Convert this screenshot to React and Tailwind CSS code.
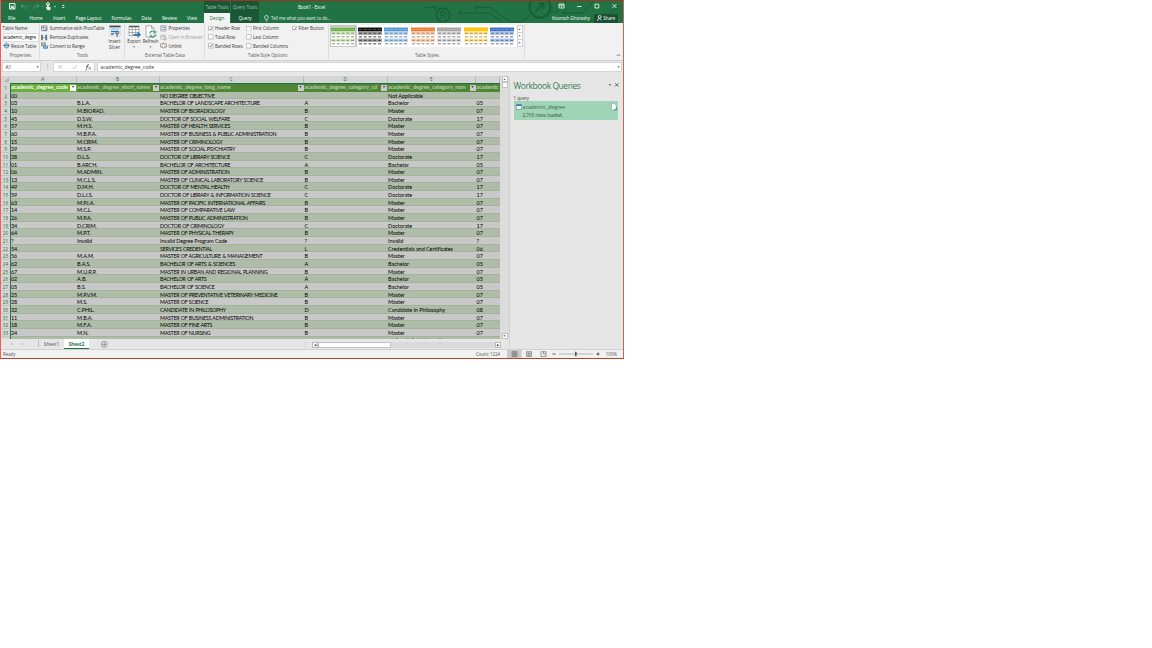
import React from "react";

const rows = [
  ["00", "", "NO DEGREE OBJECTIVE", "", "Not Applicable", ""],
  ["03", "B.L.A.", "BACHELOR OF LANDSCAPE ARCHITECTURE", "A", "Bachelor", "05"],
  ["10", "M.BIORAD.", "MASTER OF BIORADIOLOGY", "B", "Master", "07"],
  ["45", "D.S.W.", "DOCTOR OF SOCIAL WELFARE", "C", "Doctorate", "17"],
  ["57", "M.H.S.", "MASTER OF HEALTH SERVICES", "B", "Master", "07"],
  ["60", "M.B.P.A.", "MASTER OF BUSINESS & PUBLIC ADMINISTRATION", "B", "Master", "07"],
  ["15", "M.CRIM.", "MASTER OF CRIMINOLOGY", "B", "Master", "07"],
  ["29", "M.S.P.", "MASTER OF SOCIAL PSYCHIATRY", "B", "Master", "07"],
  ["38", "D.L.S.", "DOCTOR OF LIBRARY SCIENCE", "C", "Doctorate", "17"],
  ["01", "B.ARCH.", "BACHELOR OF ARCHITECTURE", "A", "Bachelor", "05"],
  ["06", "M.ADMIN.", "MASTER OF ADMINISTRATION", "B", "Master", "07"],
  ["13", "M.C.L.S.", "MASTER OF CLINICAL LABORATORY SCIENCE", "B", "Master", "07"],
  ["49", "D.M.H.", "DOCTOR OF MENTAL HEALTH", "C", "Doctorate", "17"],
  ["59", "D.L.I.S.", "DOCTOR OF LIBRARY & INFORMATION SCIENCE", "C", "Doctorate", "17"],
  ["63", "M.P.I.A.", "MASTER OF PACIFIC INTERNATIONAL AFFAIRS", "B", "Master", "07"],
  ["14", "M.C.L.", "MASTER OF COMPARATIVE LAW", "B", "Master", "07"],
  ["26", "M.P.A.", "MASTER OF PUBLIC ADMINISTRATION", "B", "Master", "07"],
  ["34", "D.CRIM.", "DOCTOR OF CRIMINOLOGY", "C", "Doctorate", "17"],
  ["64", "M.P.T.", "MASTER OF PHYSICAL THERAPY", "B", "Master", "07"],
  ["?", "Invalid", "Invalid Degree Program Code", "?", "Invalid", "?"],
  ["54", "", "SERVICES CREDENTIAL", "L", "Credentials and Certificates", "06"],
  ["56", "M.A.M.", "MASTER OF AGRICULTURE & MANAGEMENT", "B", "Master", "07"],
  ["62", "B.A.S.", "BACHELOR OF ARTS & SCIENCES", "A", "Bachelor", "05"],
  ["67", "M.U.R.P.", "MASTER IN URBAN AND REGIONAL PLANNING", "B", "Master", "07"],
  ["02", "A.B.", "BACHELOR OF ARTS", "A", "Bachelor", "05"],
  ["05", "B.S.", "BACHELOR OF SCIENCE", "A", "Bachelor", "05"],
  ["25", "M.P.V.M.", "MASTER OF PREVENTATIVE VETERINARY MEDICINE", "B", "Master", "07"],
  ["28", "M.S.", "MASTER OF SCIENCE", "B", "Master", "07"],
  ["32", "C.PHIL.", "CANDIDATE IN PHILOSOPHY", "D", "Candidate In Philosophy", "08"],
  ["11", "M.B.A.", "MASTER OF BUSINESS ADMINISTRATION", "B", "Master", "07"],
  ["18", "M.F.A.", "MASTER OF FINE ARTS", "B", "Master", "07"],
  ["24", "M.N.", "MASTER OF NURSING", "B", "Master", "07"],
];

const gridCols = "grid grid-cols-[9px_66.5px_83px_144.5px_83.5px_88.5px_24px]";
const headers = [
  "academic_degree_code",
  "academic_degree_short_name",
  "academic_degree_long_name",
  "academic_degree_category_cd",
  "academic_degree_category_nam",
  "academic",
];

const tabs = [
  ["File", "w-[21.5px]"],
  ["Home", "w-[23.5px]"],
  ["Insert", "w-[22.5px]"],
  ["Page Layout", "w-[36px]"],
  ["Formulas", "w-[30px]"],
  ["Data", "w-[20.5px]"],
  ["Review", "w-[25px]"],
  ["View", "w-[17px]"],
];

const styles = [
  ["#70ad47", "#d9ebcd", "#6f8a60"],
  ["#111111", "#a8a8a8", "#333333"],
  ["#5b9bd5", "#bcd8f1", "#54789c"],
  ["#ed7d31", "#f9d5bf", "#a8765a"],
  ["#a5a5a5", "#dcdcdc", "#707070"],
  ["#ffc000", "#ffe9a8", "#97854c"],
  ["#4472c4", "#b9caeb", "#4a6499"],
];

function Circuit() {
  return (
    <svg className="absolute left-[424px] top-px" width="198" height="22" viewBox="0 0 198 22" fill="none" stroke="#185c37" strokeWidth="1">
      <circle cx="18" cy="14" r="6.8" strokeWidth="1.4" />
      <path d="M16 17.500v-7h2.500a1.800 1.800 0 0 1 0 3.600H16m2.500 0 2 3.400" />
      <circle cx="10" cy="6.500" r="1.300" />
      <path d="M0 6.500h8.500" />
      <circle cx="35" cy="12" r="1.300" />
      <path d="M36.500 12H64l14 9M53 6.500h12l20 14.500" />
      <circle cx="51.500" cy="6.500" r="1.300" />
      <circle cx="115" cy="6" r="10.500" strokeWidth="2" />
      <path d="m110.500 10.500 8-8m-5.500 0h5.500v5.500" strokeWidth="1.600" />
      <path d="M85 21h11l9-7M124 11h8l9-10M141 12h17l10-11" />
      <circle cx="139" cy="12" r="1.300" />
      <path d="M164 20h12l18-15" />
    </svg>
  );
}

function TitleBar() {
  return (
    <div className="relative flex h-[23px] bg-[#217346] text-white">
      <Circuit />
      <div className="relative w-[203px]">
        <div className="flex h-[12px] items-center pl-[6.5px]">
          <svg width="60" height="9" viewBox="0 0 60 9" fill="none" stroke="#fff" strokeWidth=".9">
            <path d="M1.500 1.500H7V7H1.500zM2.500 4.200h3.500M3 7V5.500h2.500V7" />
            <g stroke="#5d9577">
              <path d="M15 2.200 13 4l2 1.800M13.300 4h3.200q2 .3 1.700 3" />
              <path d="m20.500 4 .8.800.8-.8" />
              <path d="m29 2.200 2 1.800-2 1.800M30.700 4h-3.200q-2 .3-1.700 3" />
              <path d="m33.500 4 .8.800.8-.8" />
            </g>
            <path d="M39.500 8 38 5.500l1.500-.3V2.500h1V5l2 .5-.5 2.500z" fill="#fff" strokeWidth=".4" />
            <circle cx="40" cy="2.200" r="1.500" />
            <path d="m46 4 .8.800.8-.8M54.300 3.500h2M54.300 5l1 1 1-1" />
          </svg>
        </div>
        <div className="flex h-[11px] items-center pl-[7px] pt-px text-[4.6px]">
          {tabs.map(([t, w]) => (
            <span key={t} className={w + " shrink-0"}>{t}</span>
          ))}
        </div>
      </div>
      <div className="relative w-[26px] bg-[#195736]">
        <div className="flex h-[13px] items-center justify-center pt-[1px] text-[4.4px] text-[#a5c8b4]">Table Tools</div>
        <div className="flex h-[10px] items-center justify-center bg-[#f3f3f3] text-[4.6px] text-[#217346]">Design</div>
      </div>
      <div className="relative ml-px w-[28px] bg-[#195736]">
        <div className="flex h-[13px] items-center justify-center pt-[1px] text-[4.4px] text-[#a5c8b4]">Query Tools</div>
        <div className="flex h-[10px] items-center justify-center text-[4.6px]">Query</div>
      </div>
      <div className="relative flex-1">
        <div className="flex h-[12px] items-center">
          <span className="ml-[39px] pt-[2px] text-[4.6px] tracking-[-.1px]">Book1 - Excel</span>
          <svg className="ml-auto" width="66" height="8" viewBox="0 0 66 8" fill="none" stroke="#fff" strokeWidth=".8">
            <path d="M2 2h5v4H2zM2 3.200h5M4.500 5.500V4M20 4.500h4.500M38 2.200h3.800V6H38zM55.500 2l4 4m0-4-4 4" />
          </svg>
        </div>
        <div className="flex h-[11px] items-center pt-px text-[4.4px]">
          <svg className="ml-[5px]" width="5" height="7" viewBox="0 0 5 7" fill="none" stroke="#fff" strokeWidth=".7">
            <path d="M1.700 4.500Q.7 3.500.7 2.300a1.800 1.800 0 0 1 3.600 0q0 1.200-1 2.200zM1.700 6h1.600" />
          </svg>
          <span className="ml-[2px] text-[#e3efe8] tracking-[-.05px]">Tell me what you want to do...</span>
          <span className="ml-auto mr-[4px]">Koorosh Ghorashy</span>
          <span className="mr-[5px] flex h-[9px] w-[24px] items-center justify-center gap-[1.5px] bg-[#185230]">
            <svg width="5" height="6" viewBox="0 0 5 6" fill="none" stroke="#fff" strokeWidth=".8">
              <circle cx="2.700" cy="1.900" r="1.400" />
              <path d="M.5 5.800q.3-2.300 2.200-2.400l1.800 2" />
            </svg>
            Share
          </span>
        </div>
      </div>
    </div>
  );
}

function Group({ label, className, children }) {
  return (
    <div className={"flex flex-col border-r border-[#dcdcdc] " + className}>
      <div className="h-[28px]">{children}</div>
      <div className="flex h-[7px] items-center justify-center text-[#555]">{label}</div>
    </div>
  );
}

function Row({ icon, children, dim }) {
  return (
    <div className={"flex h-[8.8px] items-center gap-[1.5px] " + (dim ? "text-[#a0a0a0]" : "")}>
      {icon}
      <span>{children}</span>
    </div>
  );
}

function Check({ on, children, className = "" }) {
  return (
    <div className={"flex h-[8.800px] items-center gap-[1.5px] " + className}>
      <svg width="5.500" height="5.500" viewBox="0 0 5.5 5.5" fill="#fff" stroke="#ababab" strokeWidth=".7">
        <path d="M.4.4h4.700v4.700H.4z" />
        {on && <path d="m1.300 2.800 1.100 1.100 1.900-2.400" stroke="#444" fill="none" />}
      </svg>
      <span>{children}</span>
    </div>
  );
}

function SmallIcon({ kind }) {
  return (
    <svg width="7" height="7" viewBox="0 0 7 7" fill="none" strokeWidth=".8" className="shrink-0">
      {kind === "pivot" && (
        <>
          <path d="M.5.8h5.500v5H.5zM.5 2.500h5.500M2.300.8v5" stroke="#8a8a8a" />
          <path d="M3 5.200h2.300V3" stroke="#2b6fb5" />
        </>
      )}
      {kind === "dup" && (
        <>
          <path d="M1 .8v5.500" stroke="#555" strokeWidth="1.500" />
          <path d="M5.200.8v5.500" stroke="#2e75b6" strokeWidth="1.800" />
          <path d="M2 3.500h2" stroke="#c77a3a" />
        </>
      )}
      {kind === "range" && (
        <>
          <path d="M.5.8h3.800v3H.5zM.5 2.300h3.800" stroke="#777" />
          <path d="M2.500 4h4v2.300h-4zM2.500 5.200h4" stroke="#3b80bd" />
        </>
      )}
      {kind === "resize" && (
        <>
          <path d="M1.600 2h3.800v3.200H1.600zM1.600 3.500h3.800" stroke="#2e75b6" />
          <path d="M3.500.3v1M3.500 5.800v1M.2 3.500h1M5.800 3.500h1" stroke="#2e75b6" />
        </>
      )}
      {kind === "props" && (
        <>
          <path d="M.8.8h5v5.200h-5z" stroke="#999" />
          <path d="M1.800 2.300h1M3.500 2.300h1.600M1.800 4.300h1M3.500 4.300h1.600" stroke="#2e75b6" />
        </>
      )}
      {kind === "browser" && (
        <>
          <path d="M.8 1.200h4.600v4H.8zM.8 2.500h4.600" stroke="#b5b5b5" />
          <circle cx="5" cy="5" r="1.300" stroke="#b5b5b5" />
        </>
      )}
      {kind === "unlink" && (
        <>
          <path d="M3 1.800H1.800a1.700 1.700 0 0 0 0 3.400H3M4 1.800h1.200a1.700 1.700 0 0 1 0 3.400H4" stroke="#666" />
          <path d="M3.500.2v1.300M3.500 5.500v1.300" stroke="#d88438" />
        </>
      )}
    </svg>
  );
}

function BigButton({ icon, lines, arrow, className }) {
  return (
    <div className={"flex h-[28px] flex-col items-center pt-px text-center leading-[6px] " + className}>
      {icon}
      <span className="mt-[.4px]">{lines[0]}</span>
      {arrow ? <span className="text-[3px] leading-[6px] text-[#666]">▼</span> : <span>{lines[1]}</span>}
    </div>
  );
}

function StyleSwatch({ colors, active }) {
  const [head, band, dash] = colors;
  return (
    <div className={"flex h-[22px] w-[26.5px] items-center justify-center " + (active ? "bg-[#c6c6c6]" : "")}>
      <svg width="24" height="19" viewBox="0 0 24 19">
        <path d="M0 0h24v19H0z" fill="#fff" />
        <path d="M0 .5h24v4H0z" fill={head} />
        <path d="M0 4.500h24V8H0zM0 11.500h24V15H0z" fill={band} />
        <path d="M1 2.500h22" stroke="#fff" strokeOpacity=".35" strokeWidth=".7" strokeDasharray="3 1.750" />
        <path d="M1 6.200h22M1 9.800h22M1 13.300h22M1 16.800h22" stroke={dash} strokeWidth=".9" strokeDasharray="3 1.750" />
      </svg>
    </div>
  );
}

function Ribbon() {
  return (
    <div className="flex h-[38px] border-b border-[#cfcfcf] bg-[#f1f1f1] pb-[1px] pt-px text-[4.4px] text-[#333]">
      <Group label="Properties" className="w-[38.5px] pl-[1.5px]">
        <Row>Table Name:</Row>
        <div className="flex h-[8.800px] w-[36px] items-center border border-[#dedede] bg-white text-[4.400px] tracking-[-.05px] text-black">academic_degre</div>
        <Row icon={<SmallIcon kind="resize" />}>Resize Table</Row>
      </Group>
      <Group label="Tools" className="w-[85px] pl-[1.800px]">
        <div className="flex">
          <div className="w-[64.500px] tracking-[-.03px]">
            <Row icon={<SmallIcon kind="pivot" />}>Summarize with PivotTable</Row>
            <Row icon={<SmallIcon kind="dup" />}>Remove Duplicates</Row>
            <Row icon={<SmallIcon kind="range" />}>Convert to Range</Row>
          </div>
          <BigButton
            className="w-[18px]"
            lines={["Insert", "Slicer"]}
            icon={
              <svg width="12" height="13" viewBox="0 0 12 13" fill="none" className="shrink-0">
                <path d="M1 1h10v10H1z" fill="#fff" stroke="#b0b0b0" strokeWidth=".5" />
                <path d="M.5 1.500h11" stroke="#4d4d4d" strokeWidth="1.800" />
                <path d="M2 4h8" stroke="#9dc3e6" strokeWidth="1.500" />
                <path d="M2 6.500h8M2 9h3" stroke="#2e75b6" strokeWidth="1.500" />
                <path d="M5 7.500h6L8.800 10v2.500L7.500 11.500V10z" fill="#6d7d8b" />
              </svg>
            }
          />
        </div>
      </Group>
      <Group label="External Table Data" className="w-[80.500px] pl-[1.5px]">
        <div className="flex">
          <BigButton
            className="w-[16px]"
            lines={["Export"]}
            arrow
            icon={
              <svg width="13" height="13" viewBox="0 0 13 13" fill="none" className="shrink-0">
                <path d="M1 1.500h10v9H1zM1 4.500h10M1 7.500h10M4.300 2v8.500M7.700 2v8.500" fill="#fff" stroke="#8c8c8c" strokeWidth=".7" />
                <path d="M1 1.500h10" stroke="#555" strokeWidth="1.500" />
                <path d="M5.500 9h4V6.500L13 9.700 9.500 13v-2.300h-4z" fill="#2e75b6" />
              </svg>
            }
          />
          <BigButton
            className="w-[17px]"
            lines={["Refresh"]}
            arrow
            icon={
              <svg width="13" height="13" viewBox="0 0 13 13" fill="none" className="shrink-0">
                <path d="M2 .8h5.500L10 3.300V12H2zM7.500.8v2.500H10" fill="#fff" stroke="#8c8c8c" strokeWidth=".7" />
                <path d="M5.800 8.500a3 3 0 0 1 5.400-1.200M12 9.500a3 3 0 0 1-5.500 1.200" stroke="#3a9a6e" strokeWidth="1.200" />
                <path d="M11.800 5.500v2.300H9.500M6 12.500v-2.300h2.300" stroke="#3a9a6e" strokeWidth=".8" />
              </svg>
            }
          />
          <div className="ml-[1px]">
            <Row icon={<SmallIcon kind="props" />}>Properties</Row>
            <Row dim icon={<SmallIcon kind="browser" />}>Open in Browser</Row>
            <Row icon={<SmallIcon kind="unlink" />}>Unlink</Row>
          </div>
        </div>
      </Group>
      <Group label="Table Style Options" className="w-[123.500px] pl-[3px]">
        <div className="flex">
          <div className="w-[38px]">
            <Check on>Header Row</Check>
            <Check>Total Row</Check>
            <Check on>Banded Rows</Check>
          </div>
          <div className="w-[45.500px]">
            <Check>First Column</Check>
            <Check>Last Column</Check>
            <Check>Banded Columns</Check>
          </div>
          <Check on>Filter Button</Check>
        </div>
      </Group>
      <Group label="Table Styles" className="w-[196.5px] pl-[1.5px]">
        <div className="mt-[1px] flex h-[22px] w-[192.5px] bg-white">
          <div className="flex flex-1 items-center">
            {styles.map((s, i) => (
              <StyleSwatch key={s[0]} colors={s} active={i === 0} />
            ))}
          </div>
          <div className="flex w-[6px] flex-col divide-y divide-[#d0d0d0] border border-[#d0d0d0] text-center text-[3px] leading-[6.5px] text-[#555]">
            <span className="h-[7px]">▲</span>
            <span className="h-[7px]">▼</span>
            <span className="h-[6px]">▼</span>
          </div>
        </div>
      </Group>
      <div className="flex flex-1 items-end justify-end pb-[2px] pr-[2px]">
        <svg width="5" height="4" viewBox="0 0 5 4" fill="none" stroke="#555" strokeWidth=".8">
          <path d="m.8 3 1.700-1.700L4.200 3" />
        </svg>
      </div>
    </div>
  );
}

function FormulaBar() {
  return (
    <div className="flex h-[15px] items-start bg-[#e6e6e6] pr-[1px] pt-[1.4px] text-[4.900px] text-[#333]">
      <div className="ml-px flex h-[10px] w-[39px] items-center justify-between border border-[#d4d4d4] bg-white pl-[2.500px] pr-[1px]">
        <span>A1</span>
        <span className="text-[3px]">▼</span>
      </div>
      <span className="w-[12px] text-center leading-[9px] text-[#999]">⋮</span>
      <div className="flex h-[10px] w-[42px] items-center border border-[#d4d4d4] bg-white">
        <svg width="40" height="8" viewBox="0 0 40 8" fill="none" stroke="#b5b5b5" strokeWidth=".8">
          <path d="m4.500 2.200 3.600 3.600m0-3.600L4.500 5.800M18.500 4.300l1.500 1.500 3-3.600" />
          <path d="M35 1.500q-1.500-.5-1.800 1.500l-.7 3.500q-.2 1-1.200.8M32 3.500h2.500M35 4.500l1.700 2m0-2-2 2" stroke="#444" strokeWidth=".7" />
        </svg>
      </div>
      <div className="ml-[2px] flex h-[10px] flex-1 items-center justify-between border border-[#d4d4d4] bg-white pl-[2.500px] pr-[1px]">
        <span className="tracking-[.03px]">academic_degree_code</span>
        <span className="text-[3px]">▼</span>
      </div>
    </div>
  );
}

function Sheet() {
  return (
    <div className="flex h-[263px] w-[499px] flex-col overflow-hidden bg-[#c8c8c9] font-['Lato',sans-serif] text-[5.500px] text-black [&_span]:whitespace-nowrap">
      <div className={gridCols + " h-[7px] shrink-0 bg-[#d5d5d5] text-center font-['Open_Sans',sans-serif] text-[4.600px] leading-[7px] text-[#217346]"}>
        <div className="flex items-end justify-end p-[1px]">
          <svg width="5" height="5" viewBox="0 0 5 5"><path d="M5 0v5H0z" fill="#b3b3b3" /></svg>
        </div>
        {["A", "B", "C", "D", "E", ""].map((c, i) => (
          <div key={i} className="border-r border-[#b9b9b9]">{c}</div>
        ))}
      </div>
      <div className={gridCols + " h-[8.600px] shrink-0 leading-[7px]"}>
        <div className="bg-[#d5d5d5] pt-[.6px] text-center font-['Open_Sans',sans-serif] text-[4.700px] leading-[8px] text-[#217346]">1</div>
        {headers.map((h, i) => (
          <div
            key={h}
            className={
              "flex h-[8.600px] items-center justify-between border-t border-[#1d7145] font-bold " +
              (i === 0 ? "border-l bg-[#6aae3c] text-[5.500px] text-white " : "bg-[#4f8636] pl-[.5px] text-[5.450px] text-[#bccbb2] ") +
              (i === 3 ? "tracking-[-.04px]" : i === 4 ? "tracking-[-.03px]" : i === 5 ? "tracking-[-.1px]" : "")
            }
          >
            <span>{h}</span>
            {i < 5 && (
              <span className={"mr-[.5px] flex h-[6.500px] w-[6px] shrink-0 items-center justify-center text-[3.500px] text-[#333] " + (i === 0 ? "bg-white" : "bg-[#c9c9cd]")}>▼</span>
            )}
          </div>
        ))}
      </div>
      {rows.map((r, n) => (
        <div key={n} className={gridCols + " h-[7.667px] shrink-0 leading-[8.300px]"}>
          <div className="h-[7.667px] border-b border-[#c2c2c2] bg-[#d5d5d5] text-center font-['Open_Sans',sans-serif] text-[4.700px] text-[#217346]">{n + 2}</div>
          {r.map((c, i) => (
            <div
              key={i}
              className={
                "h-[7.667px] border-b border-b-[#a2b596] " +
                (i === 0 ? "border-l border-l-[#217346] " : "pl-[.6px] ") +
                (i === 2
                  ? n === 19
                    ? "text-[5.400px] tracking-[-.08px] "
                    : "text-[5.300px] tracking-[-.29px] [word-spacing:.45px] "
                  : i === 4
                    ? "tracking-[-.06px] "
                    : "tracking-[-.12px] ") +
                (n % 2 ? "bg-[#c8c8c9]" : "bg-[#afbca9]")
              }
            >
              <span>{c}</span>
            </div>
          ))}
        </div>
      ))}
      <div className={gridCols + " h-[8px] shrink-0"}>
        <div className="bg-[#d5d5d5]" />
        <div className="col-span-4 border-l border-[#217346] bg-[#afbca9]" />
        <div className="bg-[#afbca9]">
          <svg width="70" height="2" viewBox="0 0 70 2" className="mt-[1px]">
            <path d="M8 1h2M19 1h1M24 1h2M33 1h1M37 1h1M51 1h2" stroke="#4b5247" strokeWidth=".8" />
          </svg>
        </div>
        <div className="bg-[#afbca9]" />
      </div>
    </div>
  );
}

function QueryPane() {
  return (
    <div className="w-[114px] border-l border-[#d2d2d2] bg-[#e6e6e6] pl-[3.500px] text-[4.600px] text-[#444]">
      <div className="flex h-[19px] items-center pr-[3px]">
        <span className="pt-[2px] text-[8.400px] tracking-[-.38px] text-[#2f7d53]">Workbook Queries</span>
        <svg className="mb-[1px] ml-auto" width="12" height="6" viewBox="0 0 12 6" fill="none" stroke="#555" strokeWidth=".9">
          <path d="M.5 2.200h3L2 3.800z" fill="#555" stroke="none" />
          <path d="m7 1.200 3.400 3.400m0-3.400L7 4.600" />
        </svg>
      </div>
      <div className="flex h-[6px] items-center pt-[1px] text-[4.400px]">1 query</div>
      <div className="flex h-[19px] w-[104px] bg-[#9fd5b7] pl-[2px] pr-[1px] pt-[1.500px]">
        <svg width="6" height="6" viewBox="0 0 6 6" className="mt-[1px]">
          <path d="M.4.5h5v4.800h-5z" fill="#fff" stroke="#4e7891" strokeWidth=".6" />
          <path d="M.4.5h5V2h-5z" fill="#2e75b6" />
        </svg>
        <div className="ml-[1px] leading-[8px]">
          <div className="text-[5.400px] tracking-[-.08px] text-[#3f6b52]">academic_degree</div>
          <div className="text-[4.600px] text-[#35483d]">2,763 rows loaded.</div>
        </div>
        <svg className="ml-auto" width="6" height="8" viewBox="0 0 6 8">
          <path d="M.5.5h3L5.200 2.200V7H.5z" fill="#fff" stroke="#7a9385" strokeWidth=".5" />
          <path d="M3 6.500h2.500V4.500" fill="none" stroke="#2b8a57" strokeWidth=".8" />
        </svg>
      </div>
    </div>
  );
}

function TabStrip() {
  return (
    <div className="flex h-[10px] items-stretch bg-[#e6e6e6] text-[4.800px] text-[#555]">
      <svg width="38" height="9" viewBox="0 0 38 9" fill="#b5b5b5">
        <path d="M11.500 3.500v3L9.800 5zM20.500 3.500v3L22.200 5z" />
        <path d="M37 1h.8v7H37z" />
      </svg>
      <div className="flex w-[25px] items-center justify-center pt-[1px]">Sheet1</div>
      <div className="flex w-[25px] items-center justify-center border-b border-[#217346] bg-white pt-[1px] text-[4.600px] font-bold text-[#217346]">Sheet2</div>
      <svg className="ml-[11px] self-center" width="8" height="8" viewBox="0 0 8 8" fill="none" stroke="#777" strokeWidth=".7">
        <path d="M4.300 2.400v4M2.300 4.400h4" />
        <circle cx="4.300" cy="4.400" r="3" />
      </svg>
      <span className="ml-auto mr-[4px] leading-[10px] text-[#999]">⋮</span>
      <div className="mb-[1px] mr-[8px] mt-[3px] flex w-[189px] items-center bg-[#dadada] text-[3px] text-[#444]">
        <span className="flex h-[6px] w-[6px] items-center justify-center border border-[#bbb] bg-white">◀</span>
        <span className="h-[6px] w-[73px] border border-[#c2c2c2] bg-white" />
        <span className="ml-auto flex h-[6px] w-[6px] items-center justify-center border border-[#bbb] bg-white">▶</span>
      </div>
    </div>
  );
}

function StatusBar() {
  return (
    <div className="flex h-[9px] items-center border-t border-[#d0d0d0] bg-[#f1f1f1] text-[4.400px] text-[#555]">
      <span className="ml-[2px]">Ready</span>
      <span className="ml-auto tracking-[-.08px]">Count: 1224</span>
      <svg className="ml-[7px]" width="93" height="8" viewBox="0 0 93 8" fill="none" stroke="#777" strokeWidth=".7">
        <path d="M0 0h14.500v8H0z" fill="#c8c8c8" stroke="none" />
        <path d="M5 1.700h5v4.800H5zM5 3.300h5M5 4.900h5M6.700 1.700v4.800M8.300 1.700v4.800" />
        <path d="M19.500 1.700h5v4.800h-5zM21 1.700v4.800M23 1.700v4.800M21 3.500h2M21 5h2" />
        <path d="M34 1.700h5v4.800h-5zM36.500 1.700V4H39" />
        <path d="M52 4h34" stroke="#999" />
        <path d="M45.500 4h3M89.500 4h3M91 2.500v3" stroke="#444" strokeWidth=".9" />
        <path d="M68 1.800h1.600v4.400H68z" fill="#555" stroke="none" />
      </svg>
      <span className="ml-[6px] mr-[6px]">100%</span>
    </div>
  );
}

export default function App() {
  return (
    <div className="h-[648px] w-[1152px] overflow-hidden bg-white">
      <div className="h-[359px] w-[624px] overflow-hidden whitespace-nowrap border border-b-[#b8402c] border-l-[#f0605a] border-r-[#d0605a] border-t-[#9c3320] font-['Open_Sans','Noto_Sans',sans-serif] leading-none">
        <div className="-mt-px border-t border-[#9c3320]">
          <div className="-mt-px">
            <TitleBar />
          </div>
        </div>
        <Ribbon />
        <FormulaBar />
        <div className="flex h-[273px]">
          <div className="w-[508px]">
            <div className="flex h-[263px] bg-[#dcdcdc]">
              <Sheet />
              <div className="ml-[1px] flex w-[7px] flex-col items-center justify-between bg-[#dcdcdc] text-[3px] text-[#444]">
                <div>
                  <div className="flex h-[6px] w-[6px] items-center justify-center border border-[#c2c2c2] bg-white">▲</div>
                  <div className="h-[6px] w-[6px] border border-[#c2c2c2] bg-white" />
                </div>
                <div className="flex h-[6px] w-[6px] items-center justify-center border border-[#c2c2c2] bg-white">▼</div>
              </div>
            </div>
            <TabStrip />
          </div>
          <QueryPane />
        </div>
        <StatusBar />
      </div>
    </div>
  );
}
